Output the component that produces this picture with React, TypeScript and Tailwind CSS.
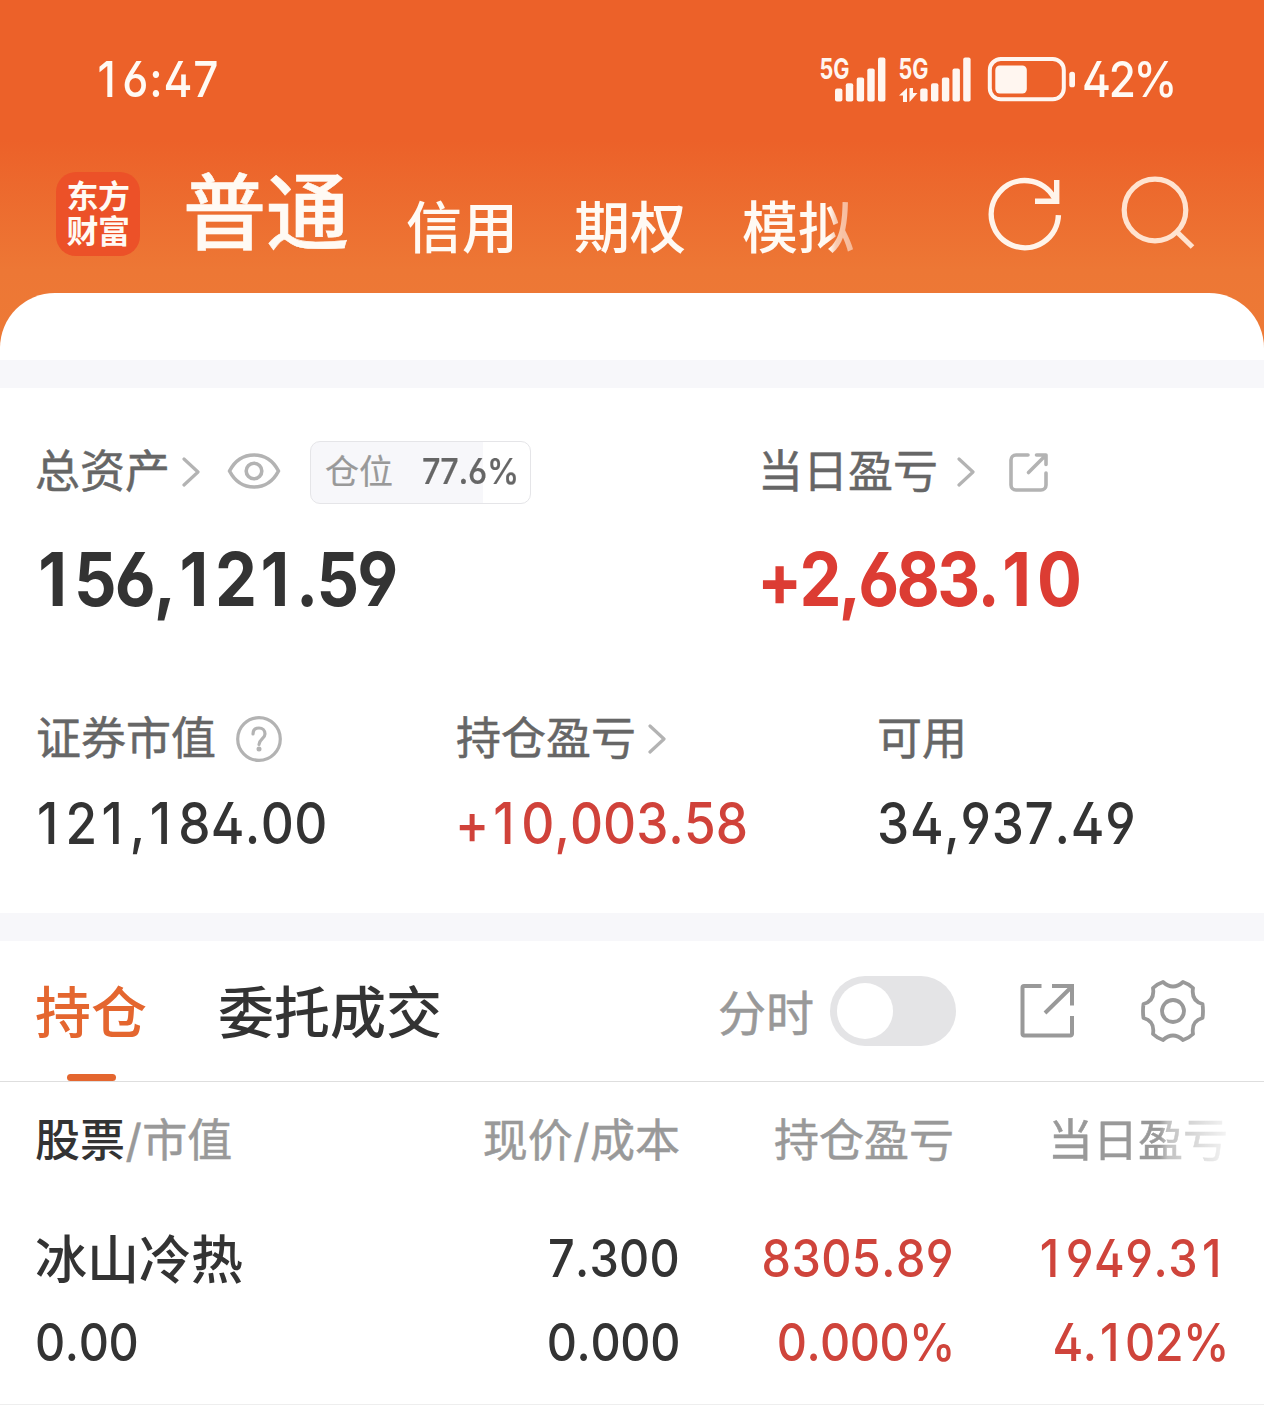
import { clsx } from 'clsx';

type NumProps = {
  children: string;
  className?: string;
  right?: boolean;
};

// Figures use Inter with the open 4 / 6 / 9 alternates, slightly condensed.
// The footless "1" is narrow, so it gets side padding to keep the columns even.
function Num({ children, className, right }: NumProps) {
  return (
    <span
      className={clsx(
        "inline-block whitespace-nowrap font-['Inter',sans-serif] [font-feature-settings:'cv02','cv03','cv04'] [font-kerning:none] scale-x-[0.9]",
        right ? 'origin-right' : 'origin-left',
        className,
      )}
    >
      {children.split(/(1)/).map((part, i) =>
        part === '1' ? (
          <span key={i} className="pr-[0.13em] pl-[0.08em]">1</span>
        ) : (
          part
        ),
      )}
    </span>
  );
}

function Slash() {
  return <span className="px-[0.5px] font-['Inter',sans-serif] leading-none font-normal">/</span>;
}

function Chevron({ className }: { className?: string }) {
  return (
    <svg viewBox="0 0 18 30" className={clsx('h-[30px] w-[18px] shrink-0', className)} fill="none" stroke="#b3b3b3" strokeWidth="3.2" strokeLinecap="round" strokeLinejoin="round">
      <path d="M2 2 16 15 2 28" />
    </svg>
  );
}

function StatusIcons() {
  const bars = [
    [835, 88],
    [845.8, 82.7],
    [856.7, 77],
    [867.3, 68],
    [878, 57],
  ];
  return (
    <svg viewBox="815 50 265 57" className="h-[57px] w-[265px] shrink-0" fill="#fff6f0">
      {bars.map(([x, y]) => (
        <rect key={x} x={x} y={y - 0.5} width="7.4" height={101 - y} rx="2" />
      ))}
      {bars.map(([x, y]) => (
        <rect key={x} x={x + 85.2} y={y - 0.5} width="7.4" height={101 - y} rx="2" />
      ))}
      <text x="819.5" y="77.5" fontSize="29" fontWeight="700" fontFamily="Inter, sans-serif" textLength="30" lengthAdjust="spacingAndGlyphs">5G</text>
      <text x="898.5" y="77.5" fontSize="29" fontWeight="700" fontFamily="Inter, sans-serif" textLength="30" lengthAdjust="spacingAndGlyphs">5G</text>
      <path d="M899 94.5 907 87v14h-4v-6.5zM909.5 87h3.5v5h4.5l-8 9z" />
      <rect x="989.8" y="58" width="74" height="40.3" rx="11" fill="none" stroke="#fff6f0" strokeWidth="4" />
      <rect x="995.3" y="64.5" width="31.5" height="28" rx="4.5" />
      <rect x="1069.3" y="70.7" width="5.7" height="15.6" rx="2.6" />
    </svg>
  );
}

function Header() {
  return (
    <header className="h-[360px] bg-[linear-gradient(#ec6129_0px,#ec6129_140px,#ed7735_270px,#ed7a36_360px)] text-[#fffaf4]">
      <div className="flex h-[158px] items-center pl-[96px]">
        <Num className="-ml-[2px] w-[721px] text-[49px] leading-none font-medium tracking-[0.9px]">16:47</Num>
        <StatusIcons />
        <Num className="ml-[2px] text-[49px] leading-none font-medium tracking-[-2.5px]">42%</Num>
      </div>
      <div className="flex h-[135px] items-start pl-[56px]">
        <div className="mt-[14px] h-[84px] w-[84px] rounded-[20px] bg-[#ec5128] pt-[5px] text-center text-[32px] leading-[35px] font-bold tracking-[-0.5px]">
          东方
          <br />
          财富
        </div>
        <nav className="flex items-start text-[56px] leading-[80px] font-medium">
          <span className="ml-[43px] text-[83px] leading-[98px] [-webkit-text-stroke:0.6px]">普通</span>
          <span className="mt-[26px] ml-[57px]">信用</span>
          <span className="mt-[26px] ml-[56px]">期权</span>
          <span className="mt-[26px] ml-[56px] [mask-image:linear-gradient(90deg,#000_78%,rgb(0_0_0/.65)_84%,rgb(0_0_0/.5)_100%)]">模拟</span>
        </nav>
        <svg viewBox="984 172 80 84" className="mt-[14px] ml-[130px] h-[84px] w-[80px]" fill="none" stroke="#fff4ea" strokeWidth="5.4">
          <path d="M1058.4 215.2A33.6 33.6 0 1 1 1054 197.5L1057 201" />
          <path d="M1056.7 180v21.3H1035" />
        </svg>
        <svg viewBox="1118 172 80 84" className="mt-[14px] ml-[54px] h-[84px] w-[80px]" fill="none" stroke="#ffe3d0" strokeWidth="5.2">
          <circle cx="1155" cy="210" r="30.8" />
          <path d="m1176.5 231.5 16 15.5" />
        </svg>
      </div>
      <div className="h-[67px] rounded-t-[55px] bg-white" />
    </header>
  );
}

function Assets() {
  return (
    <section className="h-[525px] text-[45px] leading-[62px] text-[#666]">
      <div className="grid h-[115px] grid-cols-[760px_1fr] pt-[53px] [-webkit-text-stroke:0.5px]">
        <div className="flex h-[62px] items-center pl-[35px]">
          <span className="-mt-[6px] w-[147px]">总资产</span>
          <Chevron />
          <svg viewBox="0 0 54 38" className="-mt-[2px] ml-[27px] h-[38px] w-[54px]" fill="none" stroke="#b3b3b3" strokeWidth="3.6" strokeLinejoin="round">
            <path d="M2.5 19C8 8.5 17 3 27 3s19 5.5 24.5 16C46 29.5 37 35 27 35S8 29.5 2.5 19Z" />
            <circle cx="27" cy="19" r="7.8" />
          </svg>
          <div className="ml-[29px] flex h-[63px] w-[221px] items-center rounded-[10px] border border-[#e5e5e8] bg-[linear-gradient(90deg,#f7f7fa_78.5%,#fff_78.5%)] pl-[14px] [-webkit-text-stroke:0.2px]">
            <span className="-mt-[5px] w-[97px] text-[34px] text-[#999]">仓位</span>
            <Num className="-mt-[2px] text-[36px] font-medium tracking-[-0.3px]">77.6%</Num>
          </div>
        </div>
        <div className="flex h-[62px] items-center">
          <span className="-mt-[6px] -ml-[2px] w-[199px]">当日盈亏</span>
          <Chevron />
          <svg viewBox="1008 452 41 41" className="ml-[33px] h-[41px] w-[41px]" fill="none" stroke="#b3b3b3" strokeWidth="3.6" strokeLinecap="round" strokeLinejoin="round">
            <path d="M1028 455h-12a5 5 0 0 0-5 5v25a5 5 0 0 0 5 5h25a5 5 0 0 0 5-5v-12" />
            <path d="M1036.5 455h9.5v9.5M1045.5 455.5 1028.5 472.5" />
          </svg>
        </div>
      </div>
      <div className="grid h-[180px] grid-cols-[721px_1fr] pl-[36px] text-[74px] leading-[152px] font-bold text-[#333]">
        <Num className="-ml-[3px] tracking-[-2px]">156,121.59</Num>
        <Num className="tracking-[-3px] text-[#dc3c33]">+2,683.10</Num>
      </div>
      <div className="grid grid-cols-[421px_421px_1fr] pl-[36px]">
        <div className="flex h-[98px] items-start pt-[22px] [-webkit-text-stroke:0.5px]">
          <span className="w-[200px]">证券市值</span>
          <svg viewBox="0 0 46 46" className="mt-[11px] h-[46px] w-[46px]" fill="none" stroke="#b3b3b3" strokeWidth="3.2">
            <circle cx="23" cy="23" r="21.3" />
            <path d="M17 18c0-4 2.5-6 6-6s6 2.5 6 6c0 4.5-6 5.5-6 10.5" strokeLinecap="round" />
            <circle cx="23" cy="33" r="2.5" fill="#b3b3b3" stroke="none" />
          </svg>
        </div>
        <div className="flex h-[98px] items-start pt-[22px] [-webkit-text-stroke:0.5px]">
          <span className="-ml-px w-[192px]">持仓盈亏</span>
          <Chevron className="mt-[19px]" />
        </div>
        <span className="-ml-px pt-[22px] [-webkit-text-stroke:0.5px]">可用</span>
        <Num className="-ml-[3px] text-[57px] leading-[86px] font-medium tracking-[0.4px] text-[#333]">121,184.00</Num>
        <Num className="-ml-[2px] text-[57px] leading-[86px] font-medium text-[#d0423a]">+10,003.58</Num>
        <Num className="-ml-px text-[57px] leading-[86px] font-medium tracking-[0.8px] text-[#333]">34,937.49</Num>
      </div>
    </section>
  );
}

function Toolbar() {
  return (
    <div className="flex h-[141px] items-start border-b border-[#dedede] pl-[35px] text-[56px] leading-[136px] font-medium text-[#333]">
      <div className="flex h-[140px] flex-col items-center text-[#e4662f]">
        <span>持仓</span>
        <div className="-mt-[3px] h-[7px] w-[49px] shrink-0 rounded-full bg-[#e4662f]" />
      </div>
      <span className="ml-[71px] w-[500px]">委托成交</span>
      <span className="w-[112px] text-[48px] leading-[138px] font-normal text-[#999] [-webkit-text-stroke:0.5px]">分时</span>
      <div className="mt-[35px] h-[70px] w-[126px] shrink-0 rounded-full bg-[#e4e4e6] p-[7px]">
        <div className="h-[56px] w-[56px] rounded-full bg-white" />
      </div>
      <svg viewBox="1018 980 60 60" className="mt-[39px] ml-[62px] h-[60px] w-[60px] shrink-0" fill="none" stroke="#999" strokeWidth="4">
        <path d="M1041.5 985.9h-17.5a1.5 1.5 0 0 0-1.5 1.5v46.7a1.5 1.5 0 0 0 1.5 1.5h46.5a1.5 1.5 0 0 0 1.5-1.5v-18.1" />
        <path d="M1052 985.9h20v19.5M1071 987.5 1045 1013" />
      </svg>
      <svg viewBox="-34 -34 68 68" className="mt-[36px] ml-[61px] h-[68px] w-[68px] shrink-0" fill="none" stroke="#999" strokeWidth="3.8" strokeLinejoin="round">
        <path d="M-10-29Q0-20 10-29Q16-27 20-23Q18-10 29.5-7Q30.5 0 29.5 7Q18 10 20 23Q16 27 10 29Q0 20-10 29Q-16 27-20 23Q-18 10-29.5 7Q-30.5 0-29.5-7Q-18-10-20-23Q-16-27-10-29Z" />
        <circle r="11" />
      </svg>
    </div>
  );
}

function Positions() {
  return (
    <section className="grid h-[323px] grid-cols-[360px_285px_274px_274px] content-start border-b border-[#eee] pl-[35px] text-[#333]">
      <span className="h-[135px] text-[45px] leading-[112px] font-medium">
        股票
        <span className="font-normal text-[#999] [-webkit-text-stroke:0.5px]">
          <Slash />
          市值
        </span>
      </span>
      <span className="text-right text-[45px] leading-[112px] text-[#999] [-webkit-text-stroke:0.5px]">
        现价
        <Slash />
        成本
      </span>
      <span className="text-right text-[45px] leading-[112px] text-[#999] [-webkit-text-stroke:0.5px]">持仓盈亏</span>
      <span className="text-right text-[45px] leading-[112px] text-[#999] [-webkit-text-stroke:0.5px] [mask-image:linear-gradient(90deg,#000_75%,rgb(0_0_0/.6)_78%,rgb(0_0_0/.1)_100%)]">当日盈亏</span>

      <span className="text-[52px] leading-[80px] font-medium">冰山冷热</span>
      <Num right className="text-right text-[52px] leading-[84px] font-medium tracking-[0.3px]">7.300</Num>
      <Num right className="text-right text-[52px] leading-[84px] font-medium tracking-[0.5px] text-[#cf443b]">8305.89</Num>
      <Num right className="text-right text-[52px] leading-[84px] font-medium tracking-[0.6px] text-[#cf443b]">1949.31</Num>

      <Num className="text-[52px] leading-[84px] font-medium tracking-[-0.4px]">0.00</Num>
      <Num right className="text-right text-[52px] leading-[84px] font-medium tracking-[-0.4px]">0.000</Num>
      <Num right className="-mr-[1px] text-right text-[52px] leading-[84px] font-medium tracking-[-0.6px] text-[#cf443b]">0.000%</Num>
      <Num right className="-mr-[1px] text-right text-[52px] leading-[84px] font-medium tracking-[-0.6px] text-[#cf443b]">4.102%</Num>
    </section>
  );
}

export default function App() {
  return (
    <div className="h-[1415px] w-[1264px] overflow-hidden bg-white font-['Noto_Sans_CJK_SC',sans-serif]">
      <Header />
      <div className="h-[28px] bg-[#f7f7fa]" />
      <Assets />
      <div className="h-[28px] bg-[#f7f7fa]" />
      <Toolbar />
      <Positions />
    </div>
  );
}
